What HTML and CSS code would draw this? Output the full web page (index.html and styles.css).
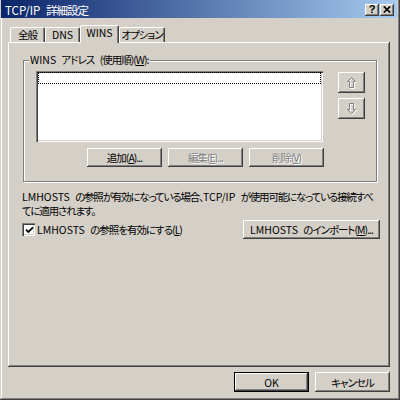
FILE: index.html
```
<!DOCTYPE html>
<html lang="ja">
<head>
<meta charset="utf-8">
<title>TCP/IP 詳細設定</title>
<link rel="stylesheet" href="styles.css">
</head>
<body>
<div class="window">
  <div class="titlebar">
    <span class="title"><span class="lat">TCP/IP </span>詳細設定</span>
    <div class="caption-btns">
      <span class="cbtn help">?</span>
      <span class="cbtn close"><svg width="8" height="7" viewBox="0 0 8 7"><path d="M0.8 0.5 L7.2 6.5 M7.2 0.5 L0.8 6.5" stroke="#000" stroke-width="1.7" fill="none"/></svg></span>
    </div>
  </div>
  <div class="main">
    <div class="tabs">
      <div class="tab t1">全般</div>
      <div class="tab t2"><span class="lat">DNS</span></div>
      <div class="tab t3 active"><span class="lat">WINS</span></div>
      <div class="tab t4">オプション</div>
    </div>
    <div class="panel">
      <fieldset class="group">
        <legend><span class="lat">WINS </span>アドレス<span class="lat"> </span>(使用順)(<u>W</u>):</legend>
        <div class="group-row">
          <div class="listbox"><div class="focus-row"></div></div>
          <div class="arrows">
            <button class="btn arrow-btn"><svg width="10" height="12" viewBox="0 0 10 12"><path d="M5.5 1.5 L9.5 5.5 L7.5 5.5 L7.5 11.5 L3.5 11.5 L3.5 5.5 L1.5 5.5 Z" stroke="#fff" fill="none"/><path d="M4.5 0.5 L8.5 4.5 L6.5 4.5 L6.5 10.5 L2.5 10.5 L2.5 4.5 L0.5 4.5 Z" stroke="#808080" fill="none"/></svg></button>
            <button class="btn arrow-btn"><svg width="10" height="12" viewBox="0 0 10 12"><path d="M5.5 11.5 L9.5 7.5 L7.5 7.5 L7.5 1.5 L3.5 1.5 L3.5 7.5 L1.5 7.5 Z" stroke="#fff" fill="none"/><path d="M4.5 10.5 L8.5 6.5 L6.5 6.5 L6.5 0.5 L2.5 0.5 L2.5 6.5 L0.5 6.5 Z" stroke="#808080" fill="none"/></svg></button>
          </div>
        </div>
        <div class="btn-row">
          <button class="btn wide">追加(<u>A</u>)...</button>
          <button class="btn wide disabled">編集(<u>E</u>)...</button>
          <button class="btn wide disabled">削除(<u>V</u>)</button>
        </div>
      </fieldset>
      <p class="info"><span class="lat">LMHOSTS </span>の参照が有効になっている場合、<span class="lat">TCP/IP </span>が使用可能になっている接続すべ<br>てに適用されます。</p>
      <div class="check-row">
        <label class="check-label"><span class="checkbox"><svg width="9" height="9" viewBox="0 0 9 9"><path d="M1 3.6 L3.3 6 L8 1.3" stroke="#000" stroke-width="1.8" fill="none"/></svg></span><span><span class="lat">LMHOSTS </span>の参照を有効にする(<u>L</u>)</span></label>
        <button class="btn import"><span><span class="lat">LMHOSTS </span>のインポート(<u>M</u>)...</span></button>
      </div>
    </div>
    <div class="footer">
      <button class="btn wide default"><span class="lat">OK</span></button>
      <button class="btn wide">キャンセル</button>
    </div>
  </div>
</div>
</body>
</html>
```
FILE: styles.css
```
html, body {
  margin: 0;
  padding: 0;
}
body {
  width: 400px;
  height: 400px;
  overflow: hidden;
  background: #d4d0c8;
  font-family: "Noto Sans CJK JP", sans-serif;
  font-size: 10.5px;
  font-feature-settings: "palt";
  letter-spacing: -1px;
  color: #000;
}
.lat { letter-spacing: 0; word-spacing: 3px; }
u { text-decoration: underline; text-underline-offset: 1px; }

.window {
  box-sizing: border-box;
  width: 400px;
  height: 400px;
  background: #d4d0c8;
  display: flex;
  flex-direction: column;
  padding: 0 3px 3px 3px;
  box-shadow: inset -1px -1px #404040, inset 1px 0 #d4d0c8, inset -2px -2px #808080, inset 2px 0 #fff;
}

.titlebar {
  box-sizing: border-box;
  height: 18px;
  margin-left: -2px;
  padding: 2px 3px 0 4px;
  display: flex;
  align-items: center;
  background: linear-gradient(to right, #0a246a, #a6caf0);
  color: #fff;
  line-height: 14px;
  font-size: 11.5px;
}
.title { white-space: nowrap; }
.caption-btns {
  margin-left: auto;
  display: flex;
  gap: 1px;
}
.cbtn {
  box-sizing: border-box;
  width: 14px;
  height: 12px;
  background: #d4d0c8;
  box-shadow: inset -1px -1px #404040, inset 1px 1px #fff, inset -2px -2px #808080;
  display: flex;
  align-items: center;
  justify-content: center;
  color: #000;
  letter-spacing: 0;
}
.help {
  font-family: "Liberation Sans", sans-serif;
  font-weight: bold;
  font-size: 11px;
  line-height: 11px;
  padding-bottom: 1px;
}
.close svg { display: block; margin-bottom: 1px; }

.main {
  flex: 1;
  display: flex;
  flex-direction: column;
  padding: 7px 7px 0 5px;
  min-height: 0;
}

.tabs {
  display: flex;
  align-items: flex-end;
  height: 17px;
  padding-left: 2px;
  position: relative;
  z-index: 1;
}
.tab {
  box-sizing: border-box;
  height: 15px;
  line-height: 13px;
  text-align: center;
  background: #d4d0c8;
  border-top: 1px solid #fff;
  border-left: 1px solid #fff;
  border-right: 1px solid #404040;
  border-radius: 2px 2px 0 0;
  box-shadow: inset -1px 0 #808080;
  white-space: nowrap;
}
.t1 { width: 35px; }
.t2 { width: 35px; }
.t3 { width: 39px; }
.t4 { width: 46px; }
.tab.active {
  height: 18px;
  margin-bottom: -1px;
  line-height: 14px;
}

.panel {
  flex: 1;
  box-sizing: border-box;
  padding: 11px 10px 0 14px;
  box-shadow: inset -1px -1px #404040, inset 1px 1px #fff, inset -2px -2px #808080;
  display: flex;
  flex-direction: column;
  min-height: 0;
}

.group {
  margin: 0 3px 0 1px;
  padding: 4px 11px 14px 12px;
  border: 1px solid #808080;
  box-shadow: inset 1px 1px #fff, 1px 1px #fff;
  min-width: 0;
}
.group legend {
  margin-left: -7px;
  padding: 0 1px;
  line-height: 14px;
  background: #d4d0c8;
  white-space: nowrap;
}

.group-row {
  display: flex;
  align-items: flex-start;
}
.listbox {
  box-sizing: border-box;
  width: 287px;
  height: 71px;
  background: #fff;
  padding: 1px 2px 2px 2px;
  box-shadow: inset 1px 1px #808080, inset 2px 2px #404040, inset -1px -1px #fff, inset -2px -2px #d4d0c8;
}
.focus-row {
  box-sizing: border-box;
  height: 12px;
  border: 1px dotted #000;
}
.arrows {
  margin-left: 15px;
  margin-top: 1px;
  display: flex;
  flex-direction: column;
  gap: 5px;
}

.btn {
  box-sizing: border-box;
  font: inherit;
  font-feature-settings: "palt";
  letter-spacing: -1px;
  color: #000;
  background: #d4d0c8;
  border: none;
  margin: 0;
  padding: 0;
  height: 19px;
  line-height: 17px;
  box-shadow: inset -1px -1px #404040, inset 1px 1px #fff, inset -2px -2px #808080;
  display: flex;
  align-items: center;
  justify-content: center;
  white-space: nowrap;
}
.arrow-btn {
  width: 27px;
  height: 21px;
}
.arrow-btn svg { display: block; }
.wide { width: 75px; }
.disabled {
  color: #808080;
  text-shadow: 1px 1px #fff;
}

.btn-row {
  display: flex;
  gap: 6px;
  margin-top: 6px;
  padding-left: 51px;
}

.info {
  margin: 8px 0 0 0;
  line-height: 14px;
  letter-spacing: -1.2px;
  white-space: nowrap;
}

.check-row {
  display: flex;
  align-items: center;
  justify-content: space-between;
  margin-top: 2px;
}
.check-label {
  display: flex;
  align-items: center;
  gap: 2px;
  white-space: nowrap;
}
.checkbox {
  box-sizing: border-box;
  width: 13px;
  height: 13px;
  background: #fff;
  box-shadow: inset 1px 1px #808080, inset 2px 2px #404040, inset -1px -1px #fff, inset -2px -2px #d4d0c8;
  display: flex;
  align-items: center;
  justify-content: center;
  padding: 1px 0 0 1px;
}
.checkbox svg { display: block; }
.import { width: 137px; }

.footer {
  display: flex;
  justify-content: flex-end;
  gap: 6px;
  padding: 5px 0 5px 0;
}
.footer .btn { height: 20px; }
.default {
  box-shadow: inset 0 0 0 1px #000, inset -2px -2px #404040, inset 2px 2px #fff, inset -3px -3px #808080;
}
```
